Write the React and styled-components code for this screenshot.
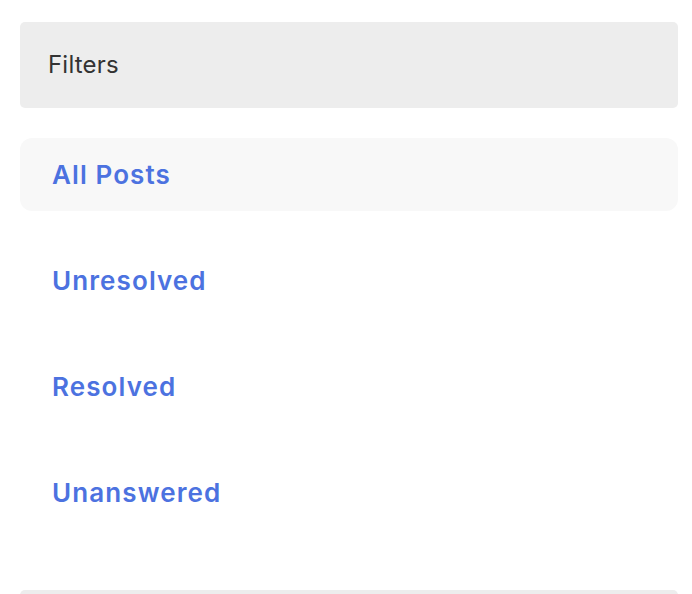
import React from 'react';
import styled, { createGlobalStyle } from 'styled-components';

const GlobalStyle = createGlobalStyle`
  body {
    margin: 0;
    background: #ffffff;
    font-family: 'Inter', 'Helvetica Neue', sans-serif;
  }
`;

const filters = [
  { label: 'All Posts', active: true },
  { label: 'Unresolved' },
  { label: 'Resolved' },
  { label: 'Unanswered' },
];

export default function App() {
  return (
    <>
      <GlobalStyle />
      <Sidebar>
        <Panel>
          <PanelTitle>Filters</PanelTitle>
        </Panel>
        <FilterList>
          {filters.map((f) => (
            <FilterItem key={f.label} $active={f.active}>
              {f.label}
            </FilterItem>
          ))}
        </FilterList>
        <Panel />
      </Sidebar>
    </>
  );
}

const Sidebar = styled.div`
  display: flex;
  flex-direction: column;
  padding: 22px 14px 0 20px;
  height: 594px;
  box-sizing: border-box;
  overflow: hidden;
`;

const Panel = styled.div`
  display: flex;
  align-items: center;
  flex-shrink: 0;
  height: 86px;
  padding: 0 28px;
  background: #ededed;
  border-radius: 5px;
`;

const PanelTitle = styled.h3`
  margin: 0;
  font-size: 24px;
  font-weight: 400;
  color: #333333;
  letter-spacing: 0.2px;
  transform: translateY(-1px);
`;

const FilterList = styled.div`
  display: flex;
  flex-direction: column;
  gap: 33px;
  margin: 30px 0 61px;
`;

const FilterItem = styled.a`
  display: flex;
  align-items: center;
  height: 73px;
  padding: 0 32px;
  border-radius: 12px;
  background: ${(p) => (p.$active ? '#f8f8f8' : 'transparent')};
  color: #4c72e0;
  font-size: 26px;
  font-weight: 600;
  letter-spacing: 1.1px;
  cursor: pointer;
`;
